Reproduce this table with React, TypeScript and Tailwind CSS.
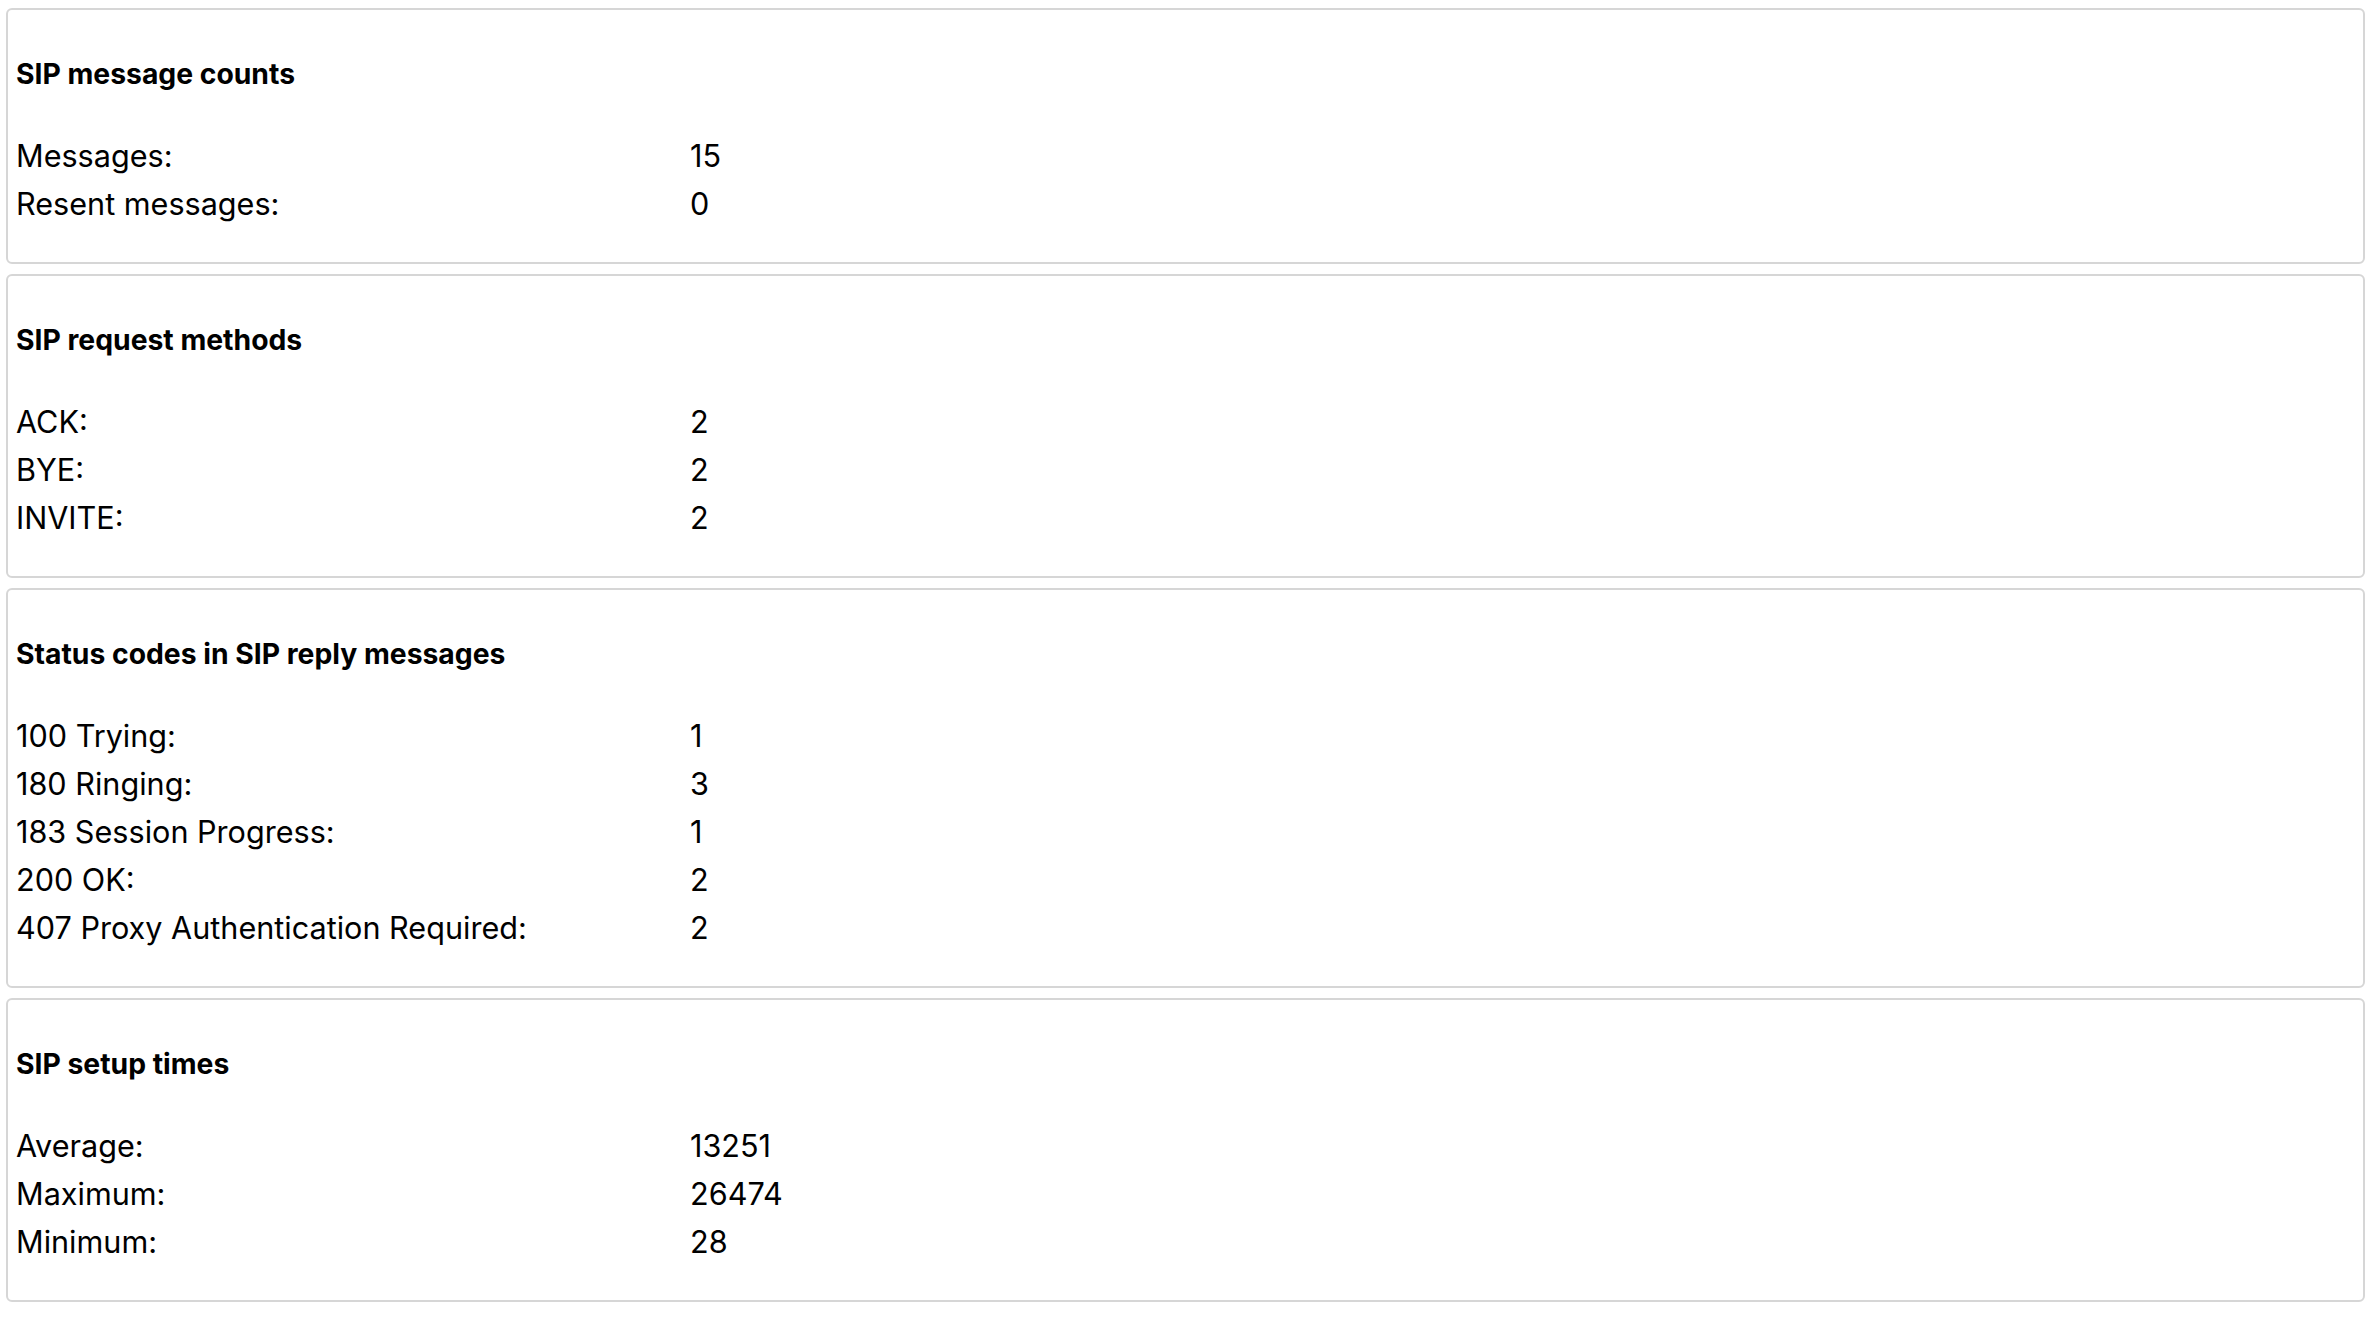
import React from "react";

type Section = { title: string; rows: [string, string][] };

const sections: Section[] = [
  { title: "SIP message counts", rows: [["Messages:", "15"], ["Resent messages:", "0"]] },
  { title: "SIP request methods", rows: [["ACK:", "2"], ["BYE:", "2"], ["INVITE:", "2"]] },
  {
    title: "Status codes in SIP reply messages",
    rows: [
      ["100 Trying:", "1"],
      ["180 Ringing:", "3"],
      ["183 Session Progress:", "1"],
      ["200 OK:", "2"],
      ["407 Proxy Authentication Required:", "2"],
    ],
  },
  { title: "SIP setup times", rows: [["Average:", "13251"], ["Maximum:", "26474"], ["Minimum:", "28"]] },
];

export default function App() {
  return (
    <div
      className="min-h-screen bg-white text-black pt-[8px] pl-[6px] pr-[9px] flex flex-col gap-[10px]"
      style={{ fontFamily: 'Inter, "Liberation Sans", Arial, sans-serif' }}
    >
      {sections.map((s) => (
        <section
          key={s.title}
          className="border-2 border-[#d6d6d6] rounded-[6px] pl-[8px] pr-[8px] pt-[40px] pb-[34px]"
        >
          <h3 className="text-[28.3px] leading-[48px] font-bold">{s.title}</h3>
          <div className="mt-[34px] flex flex-col">
            {s.rows.map(([k, v]) => (
              <div key={k} className="grid grid-cols-[674px_1fr] text-[30.6px] leading-[48px]">
                <span>{k}</span>
                <span>{v}</span>
              </div>
            ))}
          </div>
        </section>
      ))}
    </div>
  );
}
